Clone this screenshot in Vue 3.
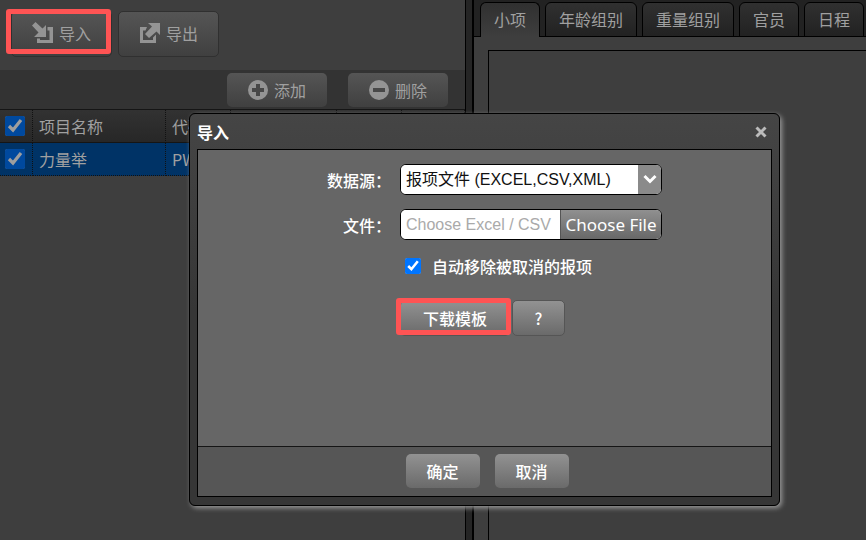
<script setup>
import { ref } from 'vue'

const tabs = ['小项', '年龄组别', '重量组别', '官员', '日程']
const activeTab = ref('小项')
const allChecked = ref(true)
const rows = ref([{ name: '力量举', code: 'PWL', checked: true }])
const source = ref('entries')
const autoRemove = ref(true)
</script>

<template>
  <div class="app">
    <main class="left">
      <div class="actions">
        <button type="button" class="btn dark tall">
          <svg class="icon" viewBox="0 0 22 22" aria-hidden="true">
            <path d="M0 3.5 L3.5 0 L10.5 6.5 L14 3 V15 H2 L6.5 10.5 Z" />
            <path d="M15.5 5 H21 V21 H5 V16.5 H8 V18 H17.5 V8.5 H15.5 Z" />
          </svg>
          <span>导入</span>
          <span class="mark"></span>
        </button>
        <button type="button" class="btn dark tall">
          <svg class="icon" viewBox="0 0 22 22" aria-hidden="true">
            <path d="M9 1 H21 V13 L17.5 9.5 L10 16 L6 12 L13 4.5 Z" />
            <path d="M1 5 H8 L6.5 8.5 H4 V18 H14 V15.5 L17 12.5 V21 H1 Z" />
          </svg>
          <span>导出</span>
        </button>
      </div>
      <div class="toolbar">
        <button type="button" class="btn dark">
          <svg class="icon round" viewBox="0 0 20 20" aria-hidden="true">
            <circle cx="10" cy="10" r="10" />
            <path class="cut" d="M8 4 H12 V8 H16 V12 H12 V16 H8 V12 H4 V8 H8 Z" />
          </svg>
          <span>添加</span>
        </button>
        <button type="button" class="btn dark">
          <svg class="icon round" viewBox="0 0 20 20" aria-hidden="true">
            <circle cx="10" cy="10" r="10" />
            <path class="cut" d="M4 8 H16 V12 H4 Z" />
          </svg>
          <span>删除</span>
        </button>
      </div>
      <table class="grid">
        <colgroup>
          <col class="c-check" /><col class="c-name" /><col class="c-code" /><col class="c-wide" /><col class="c-code" /><col />
        </colgroup>
        <thead>
          <tr>
            <th><input v-model="allChecked" type="checkbox" class="tick" aria-label="项目名称" /></th>
            <th>项目名称</th>
            <th>代码</th>
            <th></th>
            <th></th>
            <th></th>
          </tr>
        </thead>
        <tbody>
          <tr v-for="row in rows" :key="row.code">
            <td><input v-model="row.checked" type="checkbox" class="tick" :aria-label="row.name" /></td>
            <td>{{ row.name }}</td>
            <td>{{ row.code }}</td>
            <td></td>
            <td></td>
            <td></td>
          </tr>
        </tbody>
      </table>
    </main>

    <div class="splitter"></div>

    <section class="right">
      <nav class="tabs">
        <button
          v-for="tab in tabs"
          :key="tab"
          type="button"
          class="tab"
          :class="{ active: tab === activeTab }"
          @click="activeTab = tab"
        >{{ tab }}</button>
      </nav>
      <div class="panel"></div>
    </section>

    <div class="dialog" role="dialog" aria-labelledby="dialog-title">
      <header class="dialog-head">
        <h2 id="dialog-title">导入</h2>
        <button type="button" class="close" aria-label="关闭">
          <svg viewBox="0 0 12 12" aria-hidden="true">
            <path d="M1.5 1.5 L10.5 10.5 M10.5 1.5 L1.5 10.5" />
          </svg>
        </button>
      </header>
      <form class="dialog-box" @submit.prevent>
        <div class="body">
          <div class="row">
            <label for="source">数据源：</label>
            <div class="field">
              <select id="source" v-model="source">
                <option value="entries">报项文件 (EXCEL,CSV,XML)</option>
              </select>
              <span class="arrow">
                <svg viewBox="0 0 14 10" aria-hidden="true"><path d="M1.5 2 L7 7.5 L12.5 2" /></svg>
              </span>
            </div>
          </div>
          <div class="row">
            <label for="file">文件：</label>
            <div class="field">
              <input id="file" type="text" class="file" placeholder="Choose Excel / CSV / XML" readonly />
              <button type="button" class="choose">Choose File</button>
            </div>
          </div>
          <div class="row check">
            <input id="auto" v-model="autoRemove" type="checkbox" />
            <label for="auto">自动移除被取消的报项</label>
          </div>
          <div class="row template">
            <button type="button" class="btn light download">下载模板<span class="mark"></span></button>
            <button type="button" class="btn light help">?</button>
          </div>
        </div>
        <footer class="foot">
          <button type="submit" class="btn light">确定</button>
          <button type="button" class="btn light">取消</button>
        </footer>
      </form>
    </div>
  </div>
</template>

<style>
body {
  background: #3e3e3e;
  overflow: hidden;
}
</style>

<style scoped>
* {
  box-sizing: border-box;
}

.app {
  display: grid;
  grid-template-columns: minmax(0, 466fr) 8px minmax(0, 392fr);
  min-height: 100vh;
  color: #a0a0a0;
  font: 16px/24px "Noto Sans CJK SC", sans-serif;
}

button,
input,
select {
  margin: 0;
  font: inherit;
  color: inherit;
}

.left {
  border-right: 1px solid #000;
}

.actions {
  display: flex;
  gap: 6px;
  padding: 11px;
  height: 70px;
}

.btn {
  position: relative;
  display: flex;
  align-items: center;
  justify-content: center;
  gap: 6px;
  width: 100px;
  height: 34px;
  padding: 0 0 1px;
  border: 0;
  border-radius: 5px;
}

.dark {
  background: linear-gradient(#555, #404040);
}

.tall {
  gap: 5px;
  width: 101px;
  height: 46px;
  padding-bottom: 2px;
  border: 1px solid #303030;
}

.light {
  color: #fff;
  font-weight: 500;
  background: linear-gradient(#929292, #6a6a6a);
}

.mark {
  position: absolute;
  inset: -3px 0 2px -6px;
  border: 5px solid #ff5454;
  border-radius: 3px;
}

.icon {
  width: 22px;
  height: 22px;
  fill: #949494;
}

.round {
  width: 20px;
  height: 20px;
}

.cut {
  fill: #484848;
}

.toolbar {
  display: flex;
  justify-content: flex-end;
  gap: 21px;
  height: 39px;
  padding: 3px 17px 0 0;
  background: #333;
}

.grid {
  width: 100%;
  table-layout: fixed;
  border-collapse: separate;
  border-spacing: 0;
  border-top: 1px solid #151515;
}

.c-check {
  width: 33px;
}

.c-name {
  width: 133px;
}

.c-code {
  width: 65px;
}

.c-wide {
  width: 106px;
}

th,
td {
  height: 33px;
  padding: 0 5px 1px 6px;
  border-right: 1px dotted #111;
  text-align: left;
  font-weight: 400;
  white-space: nowrap;
  overflow: hidden;
}

th:first-child,
td:first-child {
  padding-left: 5px;
}

th {
  border-bottom: 1px solid #151515;
  background: linear-gradient(#323232, #272727);
}

td {
  border-bottom: 1px dotted #111;
  background: #003366;
}

.tick {
  display: block;
  width: 20px;
  height: 20px;
  filter: brightness(0.62);
}

.splitter {
  background: #252525;
  border-right: 2px solid #000;
}

.right {
  display: flex;
  flex-direction: column;
  overflow: hidden;
}

.tabs {
  display: flex;
  flex: none;
  gap: 5px;
  height: 37px;
  padding: 2px 0 0 6px;
  background: #222;
  box-shadow: inset 0 -1px #000;
}

.tab {
  flex: none;
  padding: 0 13px 1px;
  border: 1px solid #000;
  border-radius: 6px 6px 0 0;
  background: linear-gradient(#303030, #222);
}

.tab.active {
  padding-bottom: 2px;
  border-bottom: 0;
  background: linear-gradient(#303030, #3e3e3e);
}

.panel {
  flex: 1;
  margin: 13px 0 0 14px;
  border: solid #000;
  border-width: 1px 0 0 1px;
}

.dialog {
  position: absolute;
  top: 113px;
  left: 189px;
  width: 591px;
  padding: 0 7px 8px;
  border: 1px solid #000;
  border-radius: 6px;
  background: linear-gradient(#454545, #363636 50%);
  box-shadow: 2px 2px 5px #999;
  color: #fff;
}

.dialog-head {
  display: flex;
  align-items: center;
  justify-content: space-between;
  height: 35px;
  padding-right: 5px;
}

.dialog-head h2 {
  margin: 0;
  font-size: 16px;
  font-weight: 700;
}

.close {
  display: flex;
  padding: 0;
  border: 0;
  background: none;
}

.close svg {
  width: 12px;
  height: 12px;
  stroke: #bbb;
  stroke-width: 3;
}

.dialog-box {
  border: 1px solid #000;
}

.body {
  display: flex;
  flex-direction: column;
  gap: 14px;
  min-height: 296px;
  padding-top: 14px;
  background: #666;
}

.row {
  display: flex;
  align-items: center;
}

.row label {
  width: 193px;
  margin-right: 9px;
  text-align: right;
  font-weight: 500;
}

.field {
  display: flex;
  width: 262px;
  height: 31px;
  border: 1px solid #000;
  border-radius: 6px;
  overflow: hidden;
  background: #fff;
}

select {
  flex: 1;
  appearance: none;
  padding: 0 5px;
  border: 0;
  background: #fff;
  color: #111;
  font-family: "Liberation Sans", "Noto Sans CJK SC", sans-serif;
}

.arrow {
  display: flex;
  align-items: center;
  justify-content: center;
  width: 23px;
  padding-bottom: 2px;
  background: #8a8a8a;
  pointer-events: none;
}

.arrow svg {
  width: 14px;
  height: 10px;
  fill: none;
  stroke: #fff;
  stroke-width: 3;
}

.file {
  flex: 1;
  min-width: 0;
  padding: 0 5px;
  border: 0;
  background: #fff;
  font-family: "Liberation Sans", sans-serif;
}

.file::placeholder {
  color: #aaa;
}

.choose {
  width: 101px;
  padding: 0;
  border: 0;
  border-left: 1px solid #555;
  background: linear-gradient(#909090, #686868);
  font-family: "Noto Sans", sans-serif;
  font-size: 17px;
}

.check {
  gap: 11px;
  padding-left: 207px;
}

.check input {
  width: 16px;
  height: 16px;
}

.check label {
  width: auto;
}

.template {
  gap: 2px;
  padding: 8px 0 0 202px;
}

.download {
  width: 110px;
}

.help {
  width: 53px;
}

.template .btn {
  height: 36px;
  border: 1px solid #555;
}

.download .mark {
  inset: -3px -2px 0 -5px;
}

.foot {
  display: flex;
  justify-content: center;
  gap: 15px;
  height: 50px;
  padding: 7px 0 7px 5px;
  border-top: 1px solid #151515;
  background: #565656;
}

.foot .btn {
  width: 74px;
  height: 34px;
}
</style>
